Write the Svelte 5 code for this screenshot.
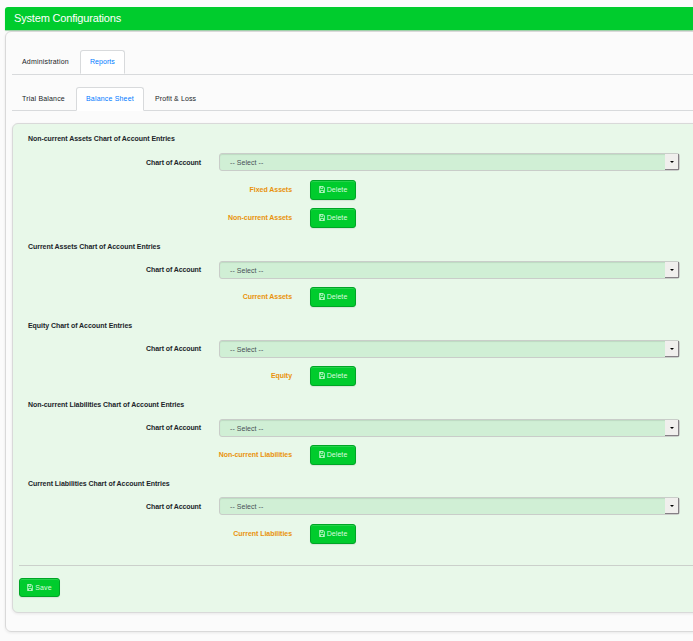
<script>
  const sections = [
    { title: 'Non-current Assets', rows: ['Fixed Assets', 'Non-current Assets'] },
    { title: 'Current Assets', rows: ['Current Assets'] },
    { title: 'Equity', rows: ['Equity'] },
    { title: 'Non-current Liabilities', rows: ['Non-current Liabilities'] },
    { title: 'Current Liabilities', rows: ['Current Liabilities'] }
  ];
</script>

{#snippet disk()}
  <svg class="disk" viewBox="0 0 6 7" width="6" height="7" fill="none" stroke="currentColor" stroke-width=".75">
    <path d="M.4.5H4.2L5.6 2V6.5H.4ZM1.6.5V2.4H3.9V.5M1.5 6.5V4.4H4.5V6.5" />
  </svg>
{/snippet}

<div class="page">
  <header>System Configurations</header>
  <main class="panel">
    <nav class="tabs first">
      <a class="tab" href="#admin">Administration</a>
      <a class="tab active" href="#reports">Reports</a>
    </nav>
    <nav class="tabs second">
      <a class="tab" href="#trial">Trial Balance</a>
      <a class="tab active" href="#sheet">Balance Sheet</a>
      <a class="tab" href="#profit">Profit &amp; Loss</a>
    </nav>
    <div class="well">
      {#each sections as s}
        <section>
          <h2>{s.title} Chart of Account Entries</h2>
          <div class="field">
            <span class="label">Chart of Account</span>
            <div class="select"><span>-- Select --</span><i class="arrow"></i></div>
          </div>
          {#each s.rows as name}
            <div class="entry">
              <span class="name">{name}</span>
              <button>{@render disk()}<span>Delete</span></button>
            </div>
          {/each}
        </section>
      {/each}
      <hr />
      <button class="save">{@render disk()}<span>Save</span></button>
    </div>
  </main>
</div>

<style>
  :global(body) { background: #fbfbfb; overflow: hidden; }
  .page {
    box-sizing: border-box; width: 693px; height: 641px; padding: 7px 0 0 5px; overflow: hidden;
    font: 7px/14px "Liberation Sans", Arial, sans-serif; color: #212529;
  }
  header {
    box-sizing: border-box; height: 23px; padding-left: 9px; border-radius: 3px 0 0 0;
    background: #00cc2d; color: #fff; font-size: 11px; line-height: 22px; letter-spacing: -.17px;
    box-shadow: 0 1px 1px rgba(0, 140, 30, .4);
  }
  .panel {
    box-sizing: border-box; width: 700px; height: 601px; margin-top: 1px; padding: 19px 0 0 6px;
    border: 1px solid #d9d9d9; border-radius: 6px; box-shadow: 0 1px 3px rgba(0, 0, 0, .08);
  }
  .tabs { display: flex; box-sizing: border-box; height: 25px; border-bottom: 1px solid #d8dadc; }
  .first { margin-top: -1px; }
  .second { margin-top: 12px; height: 24px; }
  .tab {
    box-sizing: border-box; height: 24px; padding: 0 9px; border: 1px solid transparent; letter-spacing: .18px;
    line-height: 22px; color: #212529; text-decoration: none; border-radius: 3px 3px 0 0; white-space: nowrap;
  }
  .first .tab:first-child { width: 68px; }
  .second .tab:first-child { width: 64px; }
  .second .tab.active { width: 68px; }
  .second .tab:last-child { padding-left: 10px; letter-spacing: .12px; }
  .first .tab.active { width: 45px; letter-spacing: .06px; }
  .tab.active { color: #007bff; background: #fff; border-color: #d8dadc #d8dadc #fff; }
  .well {
    box-sizing: border-box; height: 490px; margin-top: 12px; padding: 8px 0 0 6px;
    background: #e8f8e9; border: 1px solid #d9d9d9; border-radius: 6px;
    box-shadow: 0 1px 3px rgba(0, 0, 0, .08);
  }
  section { padding: 0 0 12px 9px; }
  h2 { margin: 0; font-size: 7px; line-height: 14px; height: 14px; font-weight: bold; letter-spacing: -.047px; }
  .field { display: flex; margin-top: 7px; height: 18px; }
  section:nth-child(5) .field { margin-top: 6px; }
  .label { width: 173px; margin-right: 18px; text-align: right; font-weight: bold; line-height: 18px; letter-spacing: -.1px; }
  section:first-child .label, section:nth-child(5) .label { line-height: 20px; }
  .select {
    box-sizing: border-box; width: 461px; height: 18px; padding-left: 10px; display: flex; justify-content: space-between;
    border: 1px solid #c9cdc9; border-radius: 3px; background: #d0efd5; color: #495057; letter-spacing: .06px;
    line-height: 18px; box-shadow: inset 0 1px 1px rgba(0, 0, 0, .09);
  }
  .arrow {
    box-sizing: border-box; width: 14px; height: 16px; background: #f0efed; display: flex;
    align-items: center; justify-content: center; border-right: 1px solid #858085; border-bottom: 1px solid #858085;
  }
  .arrow::after { content: ""; border: 2px solid transparent; border-top-color: #000; border-bottom: 0; }
  .entry { display: flex; margin-top: 8px; height: 20px; }
  section:first-child .field + .entry, section:nth-child(5) .entry { margin-top: 9px; }
  .name { width: 264px; margin-right: 18px; text-align: right; color: #e8920c; font-weight: bold; line-height: 19px; letter-spacing: -.045px; }
  button {
    box-sizing: border-box; display: flex; align-items: center; justify-content: center; gap: 2px;
    width: 46px; height: 20px; padding: 0 0 1px; border: 1px solid #00a526; border-radius: 3px;
    background: #00cc2d; color: #d8fbdf; font: 7px/18px "Liberation Sans", Arial, sans-serif; letter-spacing: .08px;
    box-shadow: inset 0 1px 0 rgba(255, 255, 255, .15), 0 1px 1px rgba(0, 0, 0, .08);
  }
  .disk { flex: none; }
  hr { margin: 9px 0 0; border: 0; height: 1px; background: #cbd0cb; }
  .save { width: 41px; height: 19px; margin-top: 12px; padding: 0; }
</style>
